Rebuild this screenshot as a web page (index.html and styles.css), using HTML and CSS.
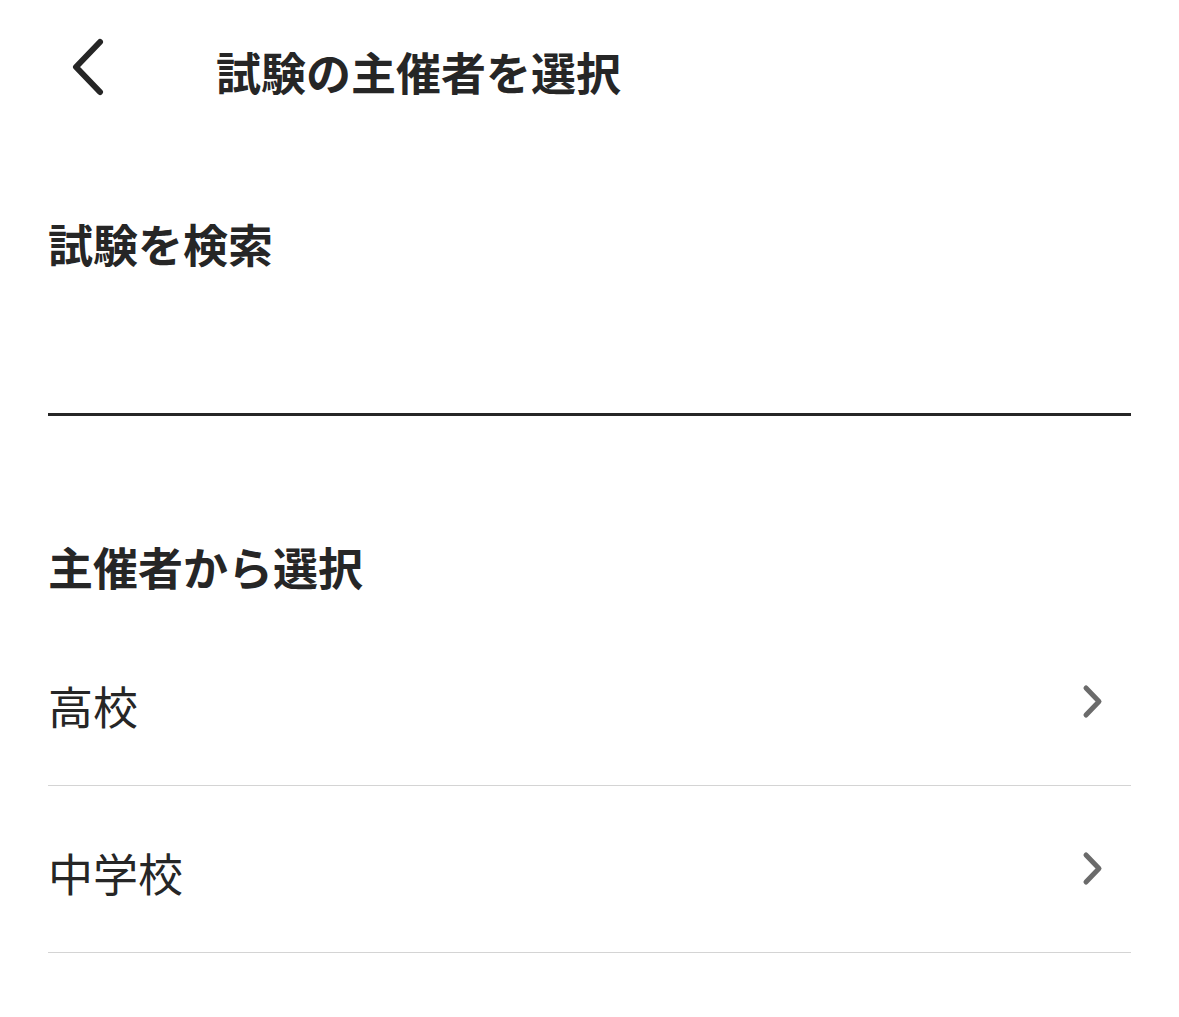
FILE: index.html
```html
<!DOCTYPE html>
<html lang="ja">
<head>
<meta charset="utf-8">
<title>試験の主催者を選択</title>
<link rel="stylesheet" href="styles.css">
</head>
<body>
<header class="app-header">
  <button class="back-btn" aria-label="戻る">
    <svg width="44" height="64" viewBox="0 0 44 64" aria-hidden="true">
      <polyline points="36,4 12,29 36,54" fill="none" stroke="#262626" stroke-width="6" stroke-linecap="round" stroke-linejoin="round"/>
    </svg>
  </button>
  <h1 class="title">試験の主催者を選択</h1>
</header>
<main class="content">
  <section class="search">
    <h2 class="section-label">試験を検索</h2>
    <div class="search-input"></div>
  </section>
  <section class="organizers">
    <h2 class="section-label organizers-label">主催者から選択</h2>
    <ul class="list">
      <li class="list-row">
        <span class="row-text">高校</span>
        <svg class="chev" width="28" height="40" viewBox="0 0 28 40" aria-hidden="true">
          <polyline points="8,6 21,19.5 8,33" fill="none" stroke="#6b6b6b" stroke-width="5" stroke-linecap="round" stroke-linejoin="round"/>
        </svg>
      </li>
      <li class="list-row">
        <span class="row-text">中学校</span>
        <svg class="chev" width="28" height="40" viewBox="0 0 28 40" aria-hidden="true">
          <polyline points="8,6 21,19.5 8,33" fill="none" stroke="#6b6b6b" stroke-width="5" stroke-linecap="round" stroke-linejoin="round"/>
        </svg>
      </li>
    </ul>
  </section>
</main>
</body>
</html>
```

FILE: styles.css
```css
* { box-sizing: border-box; }

html, body {
  margin: 0;
  padding: 0;
  background: #ffffff;
}

body {
  font-family: "Noto Sans CJK JP", "Noto Sans", sans-serif;
  color: #262626;
  width: 1179px;
}

.app-header {
  height: 146px;
  display: flex;
  align-items: center;
  padding-left: 64px;
}

.back-btn {
  border: 0;
  background: none;
  padding: 0;
  margin: 0;
  width: 44px;
  height: 64px;
  display: block;
  margin-top: -6px;
}

.back-btn svg { display: block; }

.title {
  margin: 0 0 0 108px;
  font-size: 45px;
  line-height: 60px;
  font-weight: 700;
  color: #262626;
  margin-top: -2px;
}

.content {
  padding: 0 48px;
}

.section-label {
  margin: 0;
  font-size: 45px;
  line-height: 60px;
  font-weight: 700;
  color: #262626;
}

.search {
  padding-top: 68px;
}

.search-input {
  height: 142px;
  border-bottom: 3px solid #262626;
}

.organizers-label {
  margin-top: 121px;
}

.list {
  list-style: none;
  margin: 22px 0 0;
  padding: 0;
}

.list-row {
  height: 167px;
  display: flex;
  align-items: center;
  justify-content: space-between;
  border-bottom: 1px solid #d4d4d4;
}

.row-text {
  font-size: 45px;
  line-height: 60px;
  font-weight: 400;
  color: #262626;
  padding-top: 8px;
}

.chev {
  display: block;
  margin-right: 25px;
}
```
